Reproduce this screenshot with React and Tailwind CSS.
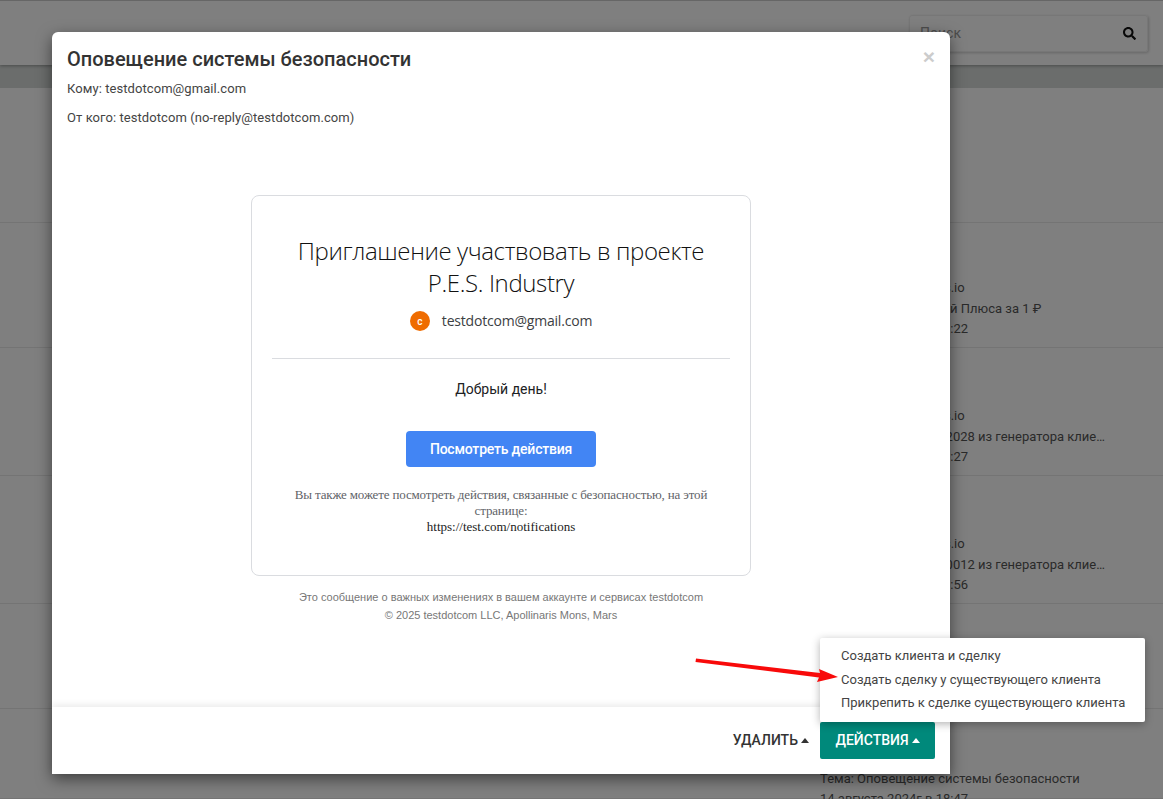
import { FaSearch } from "react-icons/fa";

const rows = [
  { height: "h-[135px]", lines: null },
  {
    height: "h-[125px]",
    pad: "pt-[55px]",
    lines: ["От: no-reply@test-dots.io", "Тема: Месяц, с семьей Плюса за 1 ₽", "14 августа 2024г в 19:22"],
  },
  {
    height: "h-[128px]",
    pad: "pt-[58px]",
    lines: ["От: no-reply@test-dots.io", "Тема: Новый счёт №2028 из генератора клиентов", "14 августа 2024г в 19:27"],
  },
  {
    height: "h-[128px]",
    pad: "pt-[58px]",
    lines: ["От: no-reply@test-dots.io", "Тема: Новый счёт №0012 из генератора клиентов", "14 августа 2024г в 18:56"],
  },
  { height: "h-[105px]", lines: null },
  {
    height: "h-[90px]",
    pad: "pt-[39px]",
    lines: ["От: no-reply@test.io", "Тема: Оповещение системы безопасности", "14 августа 2024г в 18:47"],
  },
];

function Caret({ color }) {
  return <span className={`inline-block w-0 h-0 border-x-[4.5px] border-x-transparent border-b-[5px] ${color}`} />;
}

function Background() {
  return (
    <div className="h-full bg-white">
      <div className="h-[65px] flex justify-end items-start pt-[14px] pr-[15px] border-t border-[#ccc] shadow-[0_1px_3px_rgba(0,0,0,0.3)] relative">
        <div className="w-[239px] h-[37px] flex items-center justify-between pl-[10px] pr-[11px] border border-[#eee] rounded-[3px] shadow-[1px_1px_3px_rgba(0,0,0,0.2)]">
          <span className="text-[14px] text-[#999]">Поиск</span>
          <FaSearch className="text-[13px] text-[#111]" />
        </div>
      </div>
      <div className="h-[23px] bg-[#d6dad8]" />
      {rows.map((row, i) => (
        <div key={i} className={`${row.height} ${row.pad || ""} pl-[820px] border-b border-[#e8e8e8] text-[13px] leading-[20.5px] text-[#555]`}>
          {row.lines && row.lines.map((line) => (
            <div key={line} className="w-[291px] truncate">{line}</div>
          ))}
        </div>
      ))}
    </div>
  );
}

function Email() {
  return (
    <div className="flex flex-col items-center pt-[68px]">
      <div className="w-[500px] h-[381px] border border-[#dadce0] rounded-[8px] px-[20px] pt-[39px] text-center">
        <div className="text-[24px] leading-[32px] font-light text-[#111] font-['Open_Sans',sans-serif] tracking-[-0.38px]">
          Приглашение участвовать в проекте
          <br />
          P.E.S. Industry
        </div>
        <div className="flex items-center justify-center gap-[12px] mt-[12px] pb-[27px] border-b border-[#dadce0]">
          <span className="w-[20px] h-[20px] rounded-full bg-[#ef6c00] text-white text-[10px] font-medium flex items-center justify-center">c</span>
          <span className="text-[14px] leading-[20px] text-[#3c4043] font-['Open_Sans',sans-serif] tracking-[-0.2px]">testdotcom@gmail.com</span>
        </div>
        <div className="mt-[22px] text-[14px] leading-[17px] text-[#202124]">Добрый день!</div>
        <div className="flex justify-center mt-[33px]">
          <div className="w-[190px] h-[36px] rounded-[4px] bg-[#4285f4] text-white text-[14px] font-medium tracking-[-0.2px] flex items-center justify-center">
            Посмотреть действия
          </div>
        </div>
        <div className="mt-[20px] font-['Liberation_Serif',serif] text-[13px] leading-[16px] text-[#5f6368] tracking-[-0.15px]">
          Вы также можете посмотреть действия, связанные с безопасностью, на этой странице:
          <div className="text-[#222] tracking-normal">https://test.com/notifications</div>
        </div>
      </div>
      <div className="mt-[12px] font-['Liberation_Sans',sans-serif] text-[11px] leading-[18px] text-[#777] text-center">
        Это сообщение о важных изменениях в вашем аккаунте и сервисах testdotcom
        <br />© 2025 testdotcom LLC, Apollinaris Mons, Mars
      </div>
    </div>
  );
}

function Modal() {
  return (
    <div className="absolute left-[52px] top-[32px] w-[898px] h-[742px] flex flex-col bg-white rounded-t-[6px] shadow-[0_5px_15px_rgba(0,0,0,0.5)]">
      <span className="absolute right-[15px] top-[11px] text-[21px] leading-[28px] font-bold text-[#ccc] font-['Liberation_Sans',sans-serif]">×</span>
      <div className="flex-1 px-[15px] pt-[15px]">
        <h4 className="text-[20px] leading-[24px] font-medium text-[#333]">Оповещение системы безопасности</h4>
        <p className="mt-[9px] text-[13px] leading-[18px] text-[#444] tracking-[0.07px]">Кому: testdotcom@gmail.com</p>
        <p className="mt-[11px] text-[13px] leading-[18px] text-[#444] tracking-[0.07px]">От кого: testdotcom (no-reply@testdotcom.com)</p>
        <Email />
      </div>
      <div className="h-[67px] flex justify-end items-center gap-[11px] pr-[15px] bg-white shadow-[0_-3px_6px_rgba(0,0,0,0.07)]">
        <div className="flex items-center gap-[3px] text-[14px] font-medium text-[#333]">
          УДАЛИТЬ
          <Caret color="border-b-[#333]" />
        </div>
        <div className="relative">
          <div className="w-[115px] h-[37px] flex items-center justify-center gap-[3px] rounded-[2px] bg-[#00897b] text-white text-[14px] font-medium">
            ДЕЙСТВИЯ
            <Caret color="border-b-white" />
          </div>
          <div className="absolute left-0 bottom-full w-[325px] h-[84px] py-[6px] bg-white rounded-[2px] shadow-[0_2px_8px_rgba(0,0,0,0.3)] text-[13px] leading-[23.5px] text-[#444]">
            <div className="pl-[21px]">Создать клиента и сделку</div>
            <div className="pl-[21px]">Создать сделку у существующего клиента</div>
            <div className="pl-[21px]">Прикрепить к сделке существующего клиента</div>
          </div>
        </div>
      </div>
    </div>
  );
}

export default function App() {
  return (
    <div className="relative w-[1163px] h-[799px] overflow-hidden font-['Roboto',sans-serif]">
      <Background />
      <div className="absolute inset-0 bg-black/50" />
      <Modal />
      <svg className="absolute left-[690px] top-[650px]" width="160" height="40" viewBox="690 650 160 40">
        <path d="M696 658.5 L820 673 L819 669 L838 677 L817 682 L819 677.5 L695.500 662 Z" fill="#f80a0a" />
      </svg>
    </div>
  );
}
